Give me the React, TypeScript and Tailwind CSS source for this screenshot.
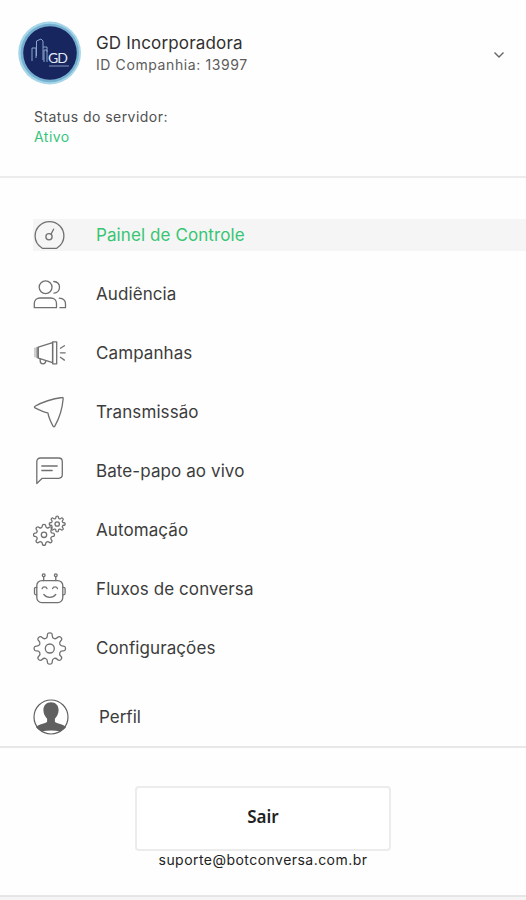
import type { ReactNode } from 'react';

// closed outline of a gear, corners softened with quadratic curves
function gearPath(cx: number, cy: number, outer: number, inner: number, teeth: number) {
  const pts: [number, number][] = [];
  const step = (Math.PI * 2) / teeth;
  for (let i = 0; i < teeth; i++) {
    const a = i * step - Math.PI / 2;
    [
      [-0.2, outer],
      [0.2, outer],
      [0.27, inner],
      [0.73, inner],
    ].forEach(([t, r]) => {
      pts.push([cx + Math.cos(a + t * step) * r, cy + Math.sin(a + t * step) * r]);
    });
  }
  const mid = (a: [number, number], b: [number, number]) =>
    `${((a[0] + b[0]) / 2).toFixed(2)} ${((a[1] + b[1]) / 2).toFixed(2)}`;
  let d = `M${mid(pts[pts.length - 1], pts[0])}`;
  pts.forEach((p, i) => {
    d += `Q${p[0].toFixed(2)} ${p[1].toFixed(2)} ${mid(p, pts[(i + 1) % pts.length])}`;
  });
  return d + 'Z';
}

function Icon({ children }: { children: ReactNode }) {
  return (
    <svg
      width="34"
      height="34"
      viewBox="0 0 34 34"
      fill="none"
      stroke="#707070"
      strokeWidth="1.3"
      strokeLinecap="round"
      strokeLinejoin="round"
      className="shrink-0"
    >
      {children}
    </svg>
  );
}

const items = [
  {
    label: 'Painel de Controle',
    active: true,
    icon: (
      <Icon>
        <path d="M9.3 30.3C5 27.5 2.1 23.2 2.1 18a14.4 14.4 0 0 1 28.8 0c0 5.2-2.9 9.5-7.2 12.3Z" />
        <circle cx="16" cy="18.7" r="3.1" />
        <path d="M18 16.2l2.6-5" />
      </Icon>
    ),
  },
  {
    label: 'Audiência',
    icon: (
      <Icon>
        <circle cx="12.6" cy="10.2" r="6.4" />
        <path d="M1.3 30.7v-4.2c0-3.2 2.5-5.5 5.7-5.5h10.8c3.2 0 5.7 2.3 5.7 5.5v4.2Z" />
        <path d="M20.8 4.5c3.4.3 5.7 2.7 5.7 5.8s-2.3 5.6-5.5 5.9M26.3 21.2c3.8.3 6.2 2.5 6.2 5.8v3.7h-5.6" />
      </Icon>
    ),
  },
  {
    label: 'Campanhas',
    icon: (
      <Icon>
        <path d="M5.3 11.2 19.6 6.7v20L5.3 22.2Z" />
        <path d="M19.6 5.8h4.1v22h-4.1ZM4.1 11.5v10" />
        <path d="M2 12.2v8.6" stroke="#b5b5b5" />
        <path d="M7.2 23v2.1c0 1.7 1.2 2.8 2.7 2.8s2.8-1.2 2.8-2.8v-.5" />
        <path d="M27.4 12.2l4-2.5M27.4 16.8h4.8M27.4 21.3l4 2.8" />
      </Icon>
    ),
  },
  {
    label: 'Transmissão',
    icon: (
      <Icon>
        <path d="M29.3 2.5C20 3.8 10.5 6.5 2 11.2c-.8.5-.7 1.3.1 1.7 4.3 2.2 8.3 4.3 12.8 5 .7 4.5 2.9 9 5.1 13.2.4.9 1.3.9 1.8 0C26.7 22.7 29.4 13 30.2 3.4c0-.6-.3-1-.9-.9Z" />
      </Icon>
    ),
  },
  {
    label: 'Bate-papo ao vivo',
    icon: (
      <Icon>
        <path d="M3.8 29.5V7.7C3.8 5.4 5.2 4 7.5 4h18.2c2.3 0 3.6 1.4 3.6 3.7v12.9c0 2.3-1.3 3.7-3.6 3.7H9.2Z" />
        <path d="M8.8 12h15.4M8.8 16.5h10.4" />
      </Icon>
    ),
  },
  {
    label: 'Automação',
    icon: (
      <Icon>
        <path d={gearPath(11, 21.8, 10.6, 7.7, 8)} />
        <circle cx="11" cy="21.8" r="2.7" />
        <path d={gearPath(24.2, 11, 8, 5.7, 8)} />
        <circle cx="24.2" cy="11" r="2.2" />
      </Icon>
    ),
  },
  {
    label: 'Fluxos de conversa',
    icon: (
      <Icon>
        <rect x="3.8" y="8.6" width="26" height="22" rx="5" />
        <path d="M3.8 15.3H3c-1 0-1.5.6-1.5 1.5v4.5c0 1 .5 1.5 1.5 1.5h.8M29.8 15.3h.8c1 0 1.5.6 1.5 1.5v4.5c0 1-.5 1.5-1.5 1.5h-.8" />
        <path d="M10.7 8.6V4.8M22.8 8.6V4.8" />
        <circle cx="10.7" cy="3.2" r="1.4" />
        <circle cx="22.8" cy="3.2" r="1.4" />
        <path d="M9.1 16.6c.6-2.3 4.3-2.3 4.9 0M19.6 16.6c.6-2.3 4.3-2.3 4.9 0M10.8 22.4c3 3.9 9 3.9 12 0" />
      </Icon>
    ),
  },
  {
    label: 'Configurações',
    icon: (
      <Icon>
        <path d={gearPath(16.8, 17.5, 15.9, 11, 8)} />
        <circle cx="16.8" cy="17.5" r="4.5" />
      </Icon>
    ),
  },
];

function Avatar() {
  return (
    <svg width="66" height="66" viewBox="0 0 66 66" fill="none" className="shrink-0">
      <circle cx="32.6" cy="33" r="31.4" fill="#a5d5e9" />
      <circle cx="32.8" cy="33" r="29.2" fill="#75b0d0" />
      <circle cx="33" cy="33" r="26.8" fill="#17265f" />
      <path
        d="M15 41V28h4v10M19.5 36V21l4.5-2 2 2v19M26 27h4v5M27 42V30h3v12"
        stroke="#8aa5cb"
        strokeWidth="1"
      />
      <text
        x="31"
        y="42.5"
        fill="#e2e8f4"
        fontFamily="Lato, sans-serif"
        fontSize="14"
        fontWeight="400"
        textLength="20"
      >
        GD
      </text>
      <path d="M32 46h20" stroke="#8496bf" strokeWidth="1" />
    </svg>
  );
}

function ProfileIcon() {
  return (
    <svg width="36" height="36" viewBox="0 0 36 36" fill="none" className="shrink-0">
      <circle cx="18" cy="18" r="17" fill="#fff" stroke="#606060" strokeWidth="1.2" />
      <path
        d="M18 3.2c-4.7 0-7.6 3.2-7.6 7.8 0 3.5 1.4 6.4 3.7 8.7v3.1c-1.8 2-8.3 2.2-11.2 5.3 1.6 2 3.4 3.4 5.6 4.4 6-1.4 13-1.4 19 0 2.2-1 4-2.4 5.6-4.4-2.9-3.1-9.4-3.3-11.2-5.3v-3.1c2.3-2.3 3.7-5.2 3.7-8.7 0-4.6-2.9-7.8-7.6-7.8Z"
        fill="#606060"
      />
    </svg>
  );
}

export default function App() {
  return (
    <main className="flex h-[900px] w-full flex-col overflow-hidden bg-[#fefefe] font-['Inter',sans-serif] text-[#3c3c3c]">
      <header className="h-[178px] border-b-2 border-[#ececec]">
        <div className="flex items-center pt-5 pl-[17px] pr-[21px]">
          <Avatar />
          <div className="ml-[13px] flex-1">
            <h1 className="text-[17px] leading-6 tracking-[0.17px] text-[#303030]">GD Incorporadora</h1>
            <p className="text-[14px] leading-5 tracking-[0.6px] text-[#5c5c5c]">ID Companhia: 13997</p>
          </div>
          <svg width="12" height="12" viewBox="0 0 12 12" fill="none" stroke="#666" strokeWidth="1.4" className="mt-1">
            <path d="M1.5 3.5 6 8l4.5-4.5" />
          </svg>
        </div>
        <div className="mt-[21px] pl-[34px] text-[14px] leading-5 tracking-[0.46px]">
          <p className="text-[#505050]">Status do servidor:</p>
          <p className="text-[#37c57c]">Ativo</p>
        </div>
      </header>

      <nav className="flex h-[570px] flex-col border-b-2 border-[#e8e8e8] pt-[41px] pl-[33px]">
        <ul className="flex flex-col gap-[27px]">
          {items.map((item) => (
            <li
              key={item.label}
              className={
                item.active
                  ? 'flex h-8 items-center gap-[29px] bg-[#f5f5f5] text-[#37c574]'
                  : 'flex h-8 items-center gap-[29px]'
              }
            >
              {item.icon}
              <span className="text-[17px] leading-6 tracking-[0.09px]">{item.label}</span>
            </li>
          ))}
        </ul>
        <div className="mt-[35px] flex h-9 items-center gap-[30px]">
          <ProfileIcon />
          <span className="text-[17px] leading-6">Perfil</span>
        </div>
      </nav>

      <footer className="flex h-[149px] flex-col items-center border-b-2 border-[#e6e6e6] pt-[38px]">
        <button className="h-[65px] w-[256px] rounded-[4px] border-2 border-[#ececec] bg-white pb-[3px] font-['Noto_Sans',sans-serif] text-[17px] font-semibold text-[#222]">
          Sair
        </button>
        <p className="-mt-px text-[14px] leading-5 tracking-[0.46px] text-[#222]">suporte@botconversa.com.br</p>
      </footer>
      <div className="flex-1 bg-[#f5f5f5]" />
    </main>
  );
}
